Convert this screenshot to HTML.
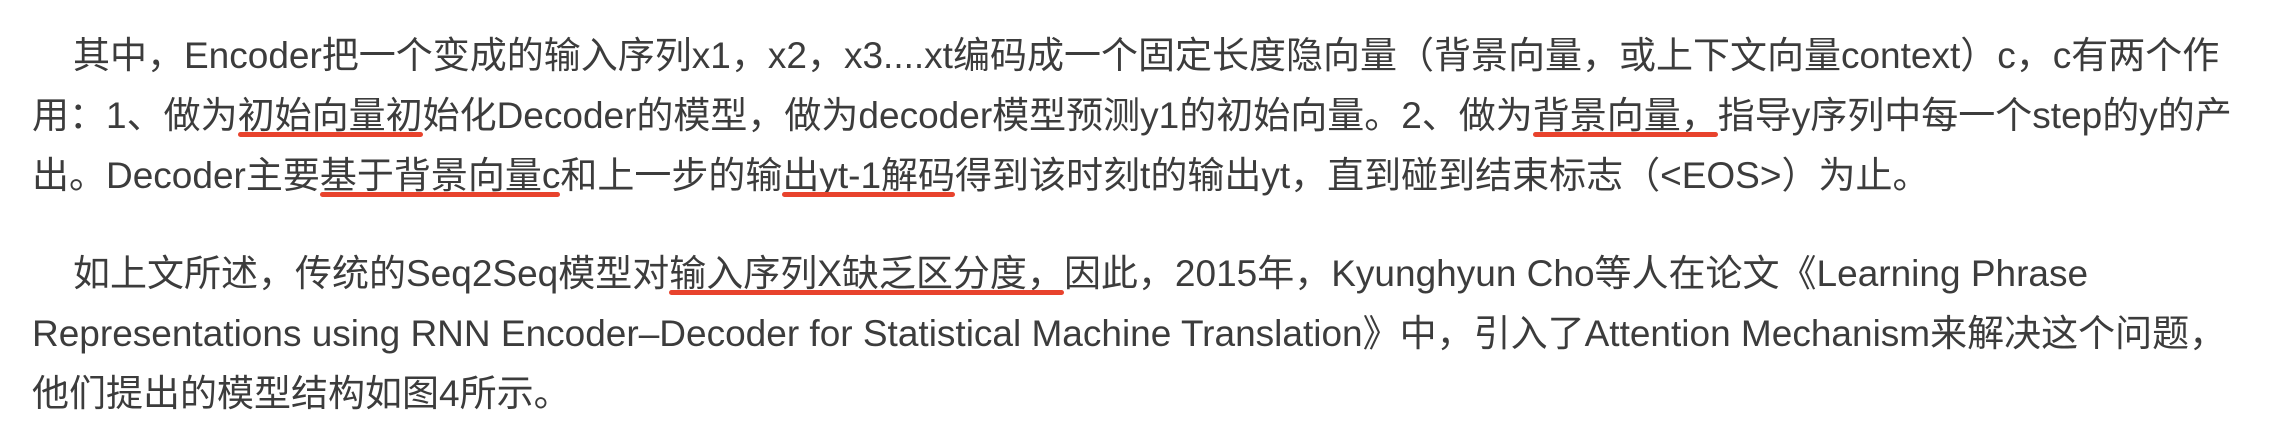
<!DOCTYPE html>
<html><head><meta charset="utf-8"><style>
html,body{margin:0;padding:0;background:#fff;}
body{width:2282px;height:448px;overflow:hidden;font-family:"Liberation Sans","Noto Sans CJK SC",sans-serif;font-size:37px;color:#3c3c3c;}
.wrap{position:absolute;left:32px;top:26px;}
.l{white-space:nowrap;height:60px;line-height:60px;}
.i{padding-left:41px;}
.gap{height:38px;}
.u{position:relative;}
.u::after{content:"";position:absolute;left:0;right:0;bottom:-1px;height:5px;border-radius:3px;background:#e8432d;}
</style></head><body>
<div class="wrap">
<div class="l i">其中，Encoder把一个变成的输入序列x1，x2，x3....xt编码成一个固定长度隐向量（背景向量，或上下文向量context）c，c有两个作</div>
<div class="l">用：1、做为<span class="u">初始向量初</span>始化Decoder的模型，做为decoder模型预测y1的初始向量。2、做为<span class="u">背景向量，</span>指导y序列中每一个step的y的产</div>
<div class="l">出。Decoder主要<span class="u">基于背景向量c</span>和上一步的输<span class="u">出yt-1解码</span>得到该时刻t的输出yt，直到碰到结束标志（&lt;EOS&gt;）为止。</div>
<div class="gap"></div>
<div class="l i">如上文所述，传统的Seq2Seq模型对<span class="u">输入序列X缺乏区分度，</span>因此，2015年，Kyunghyun Cho等人在论文《Learning Phrase</div>
<div class="l">Representations using RNN Encoder–Decoder for Statistical Machine Translation》中，引入了Attention Mechanism来解决这个问题，</div>
<div class="l">他们提出的模型结构如图4所示。</div>
</div>
</body></html>
